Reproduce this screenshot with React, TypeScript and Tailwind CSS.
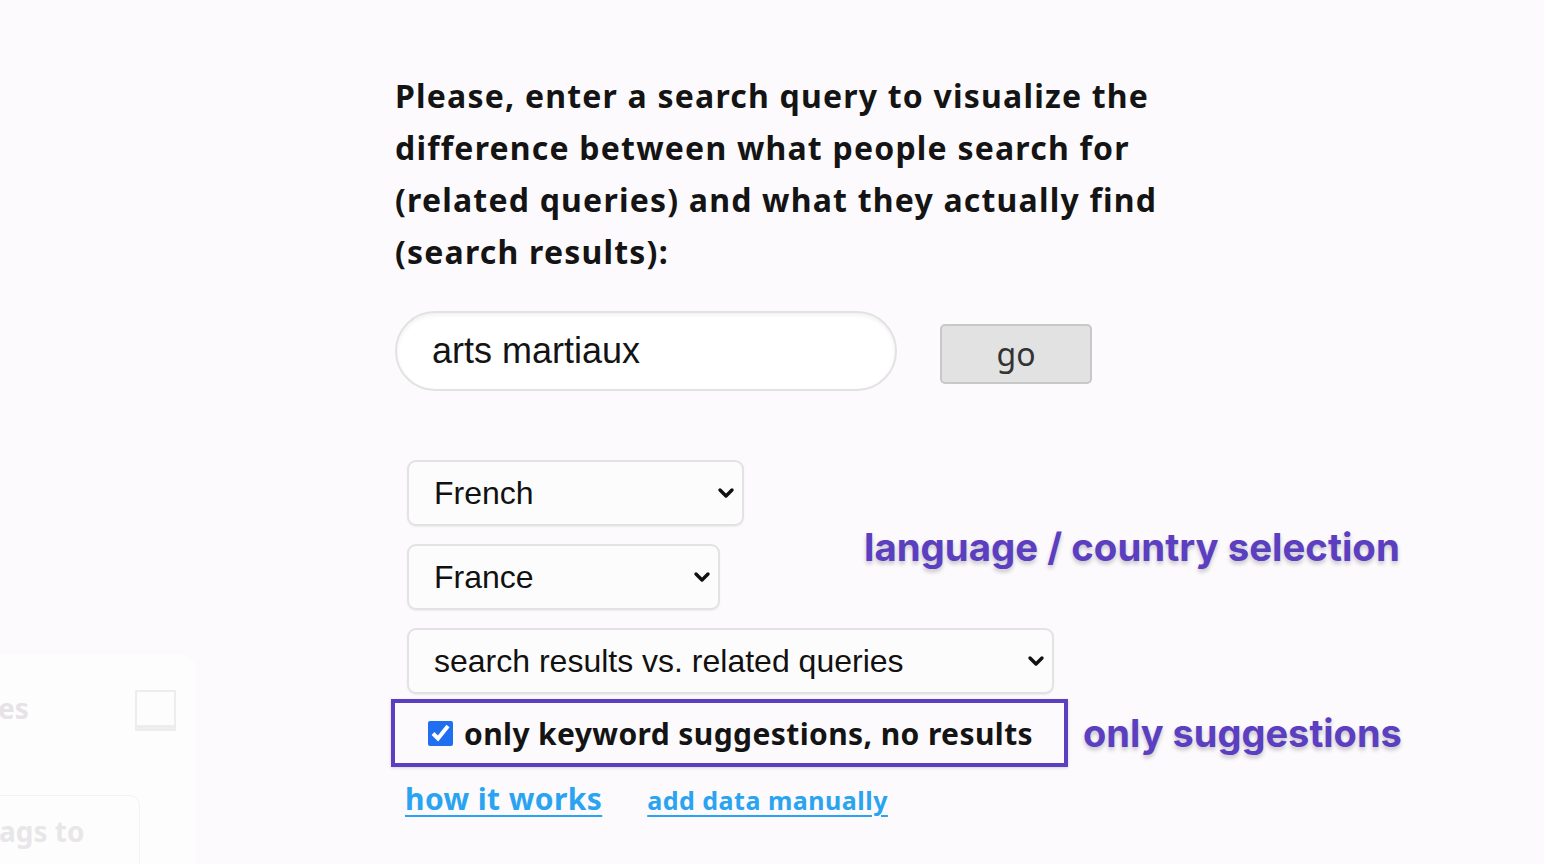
import React from 'react';

function Chevron() {
  return (
    <svg width="18" height="12" viewBox="0 0 18 12" className="pointer-events-none absolute right-[9px] top-1/2 -translate-y-1/2">
      <path d="M3 3 L9 9 L15 3" fill="none" stroke="#111" strokeWidth="3.4" strokeLinecap="round" strokeLinejoin="round" />
    </svg>
  );
}

function Select({ value, options, width }: { value: string, options: string[], width: string }) {
  return (
    <div className={`relative ${width}`}>
      <select
        defaultValue={value}
        className="h-[66px] w-full appearance-none rounded-[9px] border-2 border-[#e4e2e4] bg-[#fdfcfd] pl-[25px] pr-10 text-[32px] text-[#111] shadow-[0_1px_2px_rgba(0,0,0,0.06)] outline-none"
        style={{ fontFamily: '"Liberation Sans", Arial, sans-serif' }}
      >
        {options.map((o) => (
          <option key={o}>{o}</option>
        ))}
      </select>
      <Chevron />
    </div>
  );
}

export default function App() {
  const [query, setQuery] = React.useState('arts martiaux');
  const [onlySuggestions, setOnlySuggestions] = React.useState(true);

  return (
    <div className="relative h-[864px] w-full overflow-hidden bg-[#fcfafc]" style={{ fontFamily: '"Noto Sans", sans-serif' }}>
      {/* faded side panel behind */}
      <div className="absolute left-0 top-[655px] h-[220px] w-[196px] rounded-tr-[14px] bg-white opacity-60">
        <div className="absolute left-[-2px] top-[32px] text-[28px] font-bold text-[#d6d4d6]">es</div>
        <div className="absolute left-[135px] top-[35px] h-[41px] w-[41px] border-2 border-[#e6e6e6] border-b-[6px] bg-white" />
        <div className="absolute left-[-12px] top-[140px] h-[90px] w-[152px] rounded-[10px] border border-[#efedef] bg-white">
          <div className="pl-[10px] pt-[14px] text-[28px] font-bold text-[#dcdadc]">ags to</div>
        </div>
      </div>

      <div className="flex flex-col pl-[395px] pt-[70px]">
        <p className="w-[820px] text-[32px] font-bold leading-[52px] tracking-[1.2px] text-[#141414]">
          Please, enter a search query to visualize the difference between what people search for (related queries) and what they actually find (search results):
        </p>

        <div className="mt-[33px] flex items-center gap-[43px]">
          <input
            value={query}
            onChange={(e) => setQuery(e.target.value)}
            className="h-[80px] w-[502px] rounded-full border-2 border-[#e2e2e2] bg-white pl-[35px] text-[36px] text-[#141414] shadow-[inset_0_2px_4px_rgba(0,0,0,0.06)] outline-none"
            style={{ fontFamily: '"Liberation Sans", Arial, sans-serif' }}
          />
          <button className="mt-[5px] h-[60px] w-[152px] rounded-[5px] border-2 border-[#c8c8c8] bg-[#e2e2e2] text-[32px] leading-none text-[#333]">
            go
          </button>
        </div>

        <div className="mt-[69px] flex flex-col gap-[18px] pl-[12px]">
          <Select value="French" options={['French', 'English', 'German']} width="w-[337px]" />
          <Select value="France" options={['France', 'Belgium', 'Canada']} width="w-[313px]" />
          <Select value="search results vs. related queries" options={['search results vs. related queries']} width="w-[647px]" />
        </div>

        <label className="ml-[-4px] mt-[5px] flex h-[68px] w-[677px] cursor-pointer items-center gap-[11px] border-[4px] border-[#5b3fc0] pl-[33px] shadow-[0_1px_3px_rgba(0,0,0,0.15)]">
          <input
            type="checkbox"
            checked={onlySuggestions}
            onChange={(e) => setOnlySuggestions(e.target.checked)}
            className="h-[25px] w-[25px] accent-[#1f6ff0]"
          />
          <span className="text-[30px] font-bold tracking-[0.4px] text-[#141414]">only keyword suggestions, no results</span>
        </label>

        <div className="mt-[9px] flex items-baseline gap-[45px] pl-[10px]">
          <a href="#" className="text-[30px] font-bold tracking-[0.4px] text-[#2aa4f0] underline decoration-2 underline-offset-[5px]">how it works</a>
          <a href="#" className="text-[25px] font-bold tracking-[0.5px] text-[#2aa4f0] underline decoration-2 underline-offset-[5px]">add data manually</a>
        </div>
      </div>

      {/* annotations */}
      <div
        className="absolute left-[864px] top-[519px] text-[38.4px] font-bold text-[#5b3fc0] [text-shadow:0_3px_4px_rgba(0,0,0,0.22)]"
        style={{ fontFamily: 'Inter, sans-serif' }}
      >
        language / country selection
      </div>
      <div
        className="absolute left-[1083px] top-[705px] text-[38px] font-bold text-[#5b3fc0] [text-shadow:0_3px_4px_rgba(0,0,0,0.22)]"
        style={{ fontFamily: 'Inter, sans-serif' }}
      >
        only suggestions
      </div>
    </div>
  );
}
